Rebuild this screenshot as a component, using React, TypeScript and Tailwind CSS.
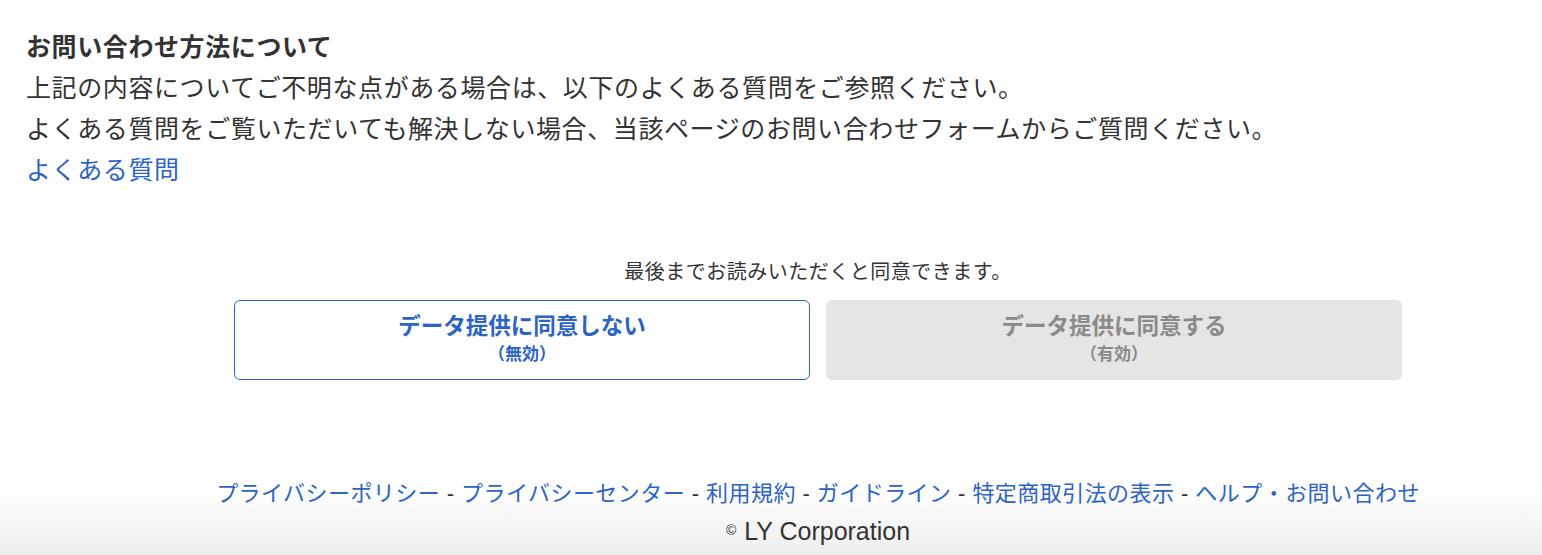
import React from "react";

const FONT = { fontFamily: '"Liberation Sans", "Noto Sans CJK JP", sans-serif' };

export default function App() {
  const links = [
    "プライバシーポリシー",
    "プライバシーセンター",
    "利用規約",
    "ガイドライン",
    "特定商取引法の表示",
    "ヘルプ・お問い合わせ",
  ];
  return (
    <div className="w-full bg-white text-[#333]" style={FONT}>
      <section className="pl-[26px] pt-[27px] text-[25px] leading-[41px] tracking-[0.6px]">
        <h2 className="font-bold">お問い合わせ方法について</h2>
        <p>上記の内容についてご不明な点がある場合は、以下のよくある質問をご参照ください。</p>
        <p>よくある質問をご覧いただいても解決しない場合、当該ページのお問い合わせフォームからご質問ください。</p>
        <a className="text-[#2c63c5]" href="#">よくある質問</a>
      </section>

      <section className="mt-[66px] pl-[94px]">
        <p className="text-center text-[20px] leading-[30px] tracking-[0.5px]">最後までお読みいただくと同意できます。</p>
        <div className="mt-[13px] flex justify-center gap-[16px]">
          <button className="flex h-[80px] w-[576px] flex-col items-center justify-center rounded-[6px] border border-[#2c63c5] bg-white text-[#2c63c5]">
            <span className="text-[22.5px] font-bold leading-[30px]">データ提供に同意しない</span>
            <span className="text-[17px] font-bold leading-[26px]">（無効）</span>
          </button>
          <button className="flex h-[80px] w-[576px] flex-col items-center justify-center rounded-[6px] bg-[#e5e5e5] text-[#8a8a8a]">
            <span className="text-[22.5px] font-bold leading-[30px]">データ提供に同意する</span>
            <span className="text-[17px] font-bold leading-[26px]">（有効）</span>
          </button>
        </div>
      </section>

      <footer className="mt-[92px] bg-gradient-to-b from-white from-[15%] to-[#ececec] pl-[94px] pt-[4px] pb-[10px]">
        <p className="text-center text-[22px] leading-[36px] tracking-[0.45px]">
          {links.map((l, i) => (
            <React.Fragment key={l}>
              {i > 0 && <span className="text-[#333]"> - </span>}
              <a href="#" className="text-[#2c63c5]">{l}</a>
            </React.Fragment>
          ))}
        </p>
        <p className="mt-[1px] text-center text-[25px] leading-[36px] text-[#333]">
          <span className="relative top-[-5px] mr-[8px] text-[14px]">©</span>LY Corporation
        </p>
      </footer>
    </div>
  );
}
